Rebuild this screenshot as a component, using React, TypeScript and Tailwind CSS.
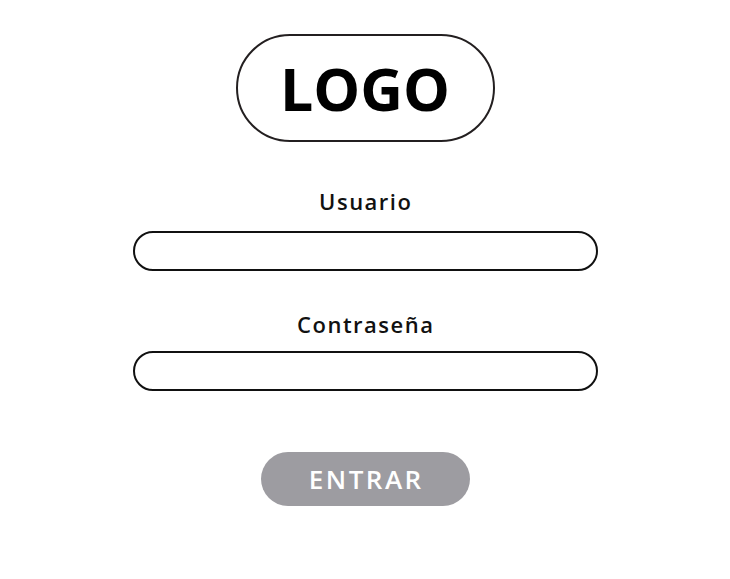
export default function App() {
  return (
    <div className="min-h-[579px] w-[730px] bg-white flex flex-col items-center font-['Open_Sans','Noto_Sans',sans-serif]">
      {/* Logo */}
      <div className="mt-[34px] w-[259px] h-[108px] rounded-full border-2 border-[#231f20] flex items-center justify-center">
        <span className="font-bold text-[59px] leading-none text-black">LOGO</span>
      </div>

      <label className="mt-[45px] pl-[1.5px] text-[22px] leading-[28px] tracking-[1.5px] font-semibold text-[#111]">
        Usuario
      </label>
      <div className="mt-[16px] w-[465px] h-[40px] rounded-full border-2 border-[#111]" />

      <label className="mt-[39px] pl-[1.5px] text-[22px] leading-[28px] tracking-[1.5px] font-semibold text-[#111]">
        Contraseña
      </label>
      <div className="mt-[13px] w-[465px] h-[40px] rounded-full border-2 border-[#111]" />

      <button className="mt-[61px] w-[209px] h-[54px] pl-[2.5px] rounded-full bg-[#9d9ca1] text-white text-[26px] tracking-[2.5px] font-semibold">
        ENTRAR
      </button>
    </div>
  );
}
